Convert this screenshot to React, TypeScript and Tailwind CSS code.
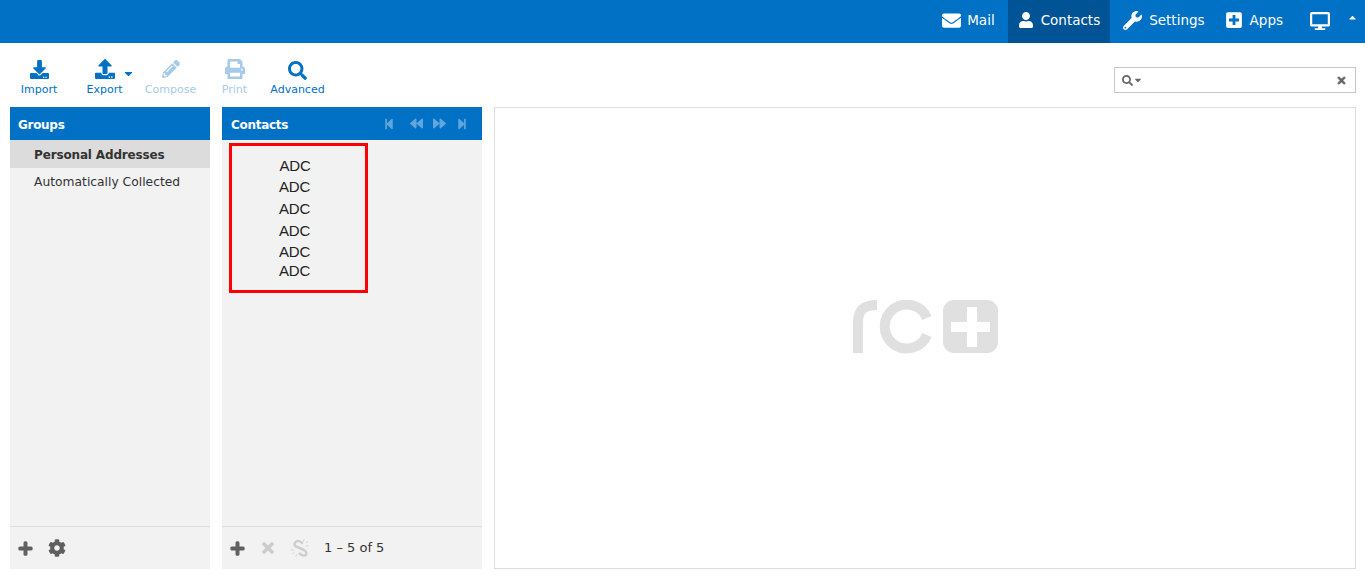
import { FaBackward, FaCaretDown, FaCaretUp, FaCog, FaDesktop, FaDownload, FaEnvelope, FaForward, FaPencilAlt, FaPlus, FaPlusSquare, FaPrint, FaSearch, FaStepBackward, FaStepForward, FaTimes, FaUpload, FaUser, FaWrench } from 'react-icons/fa'

const font = "font-['DejaVu_Sans',Verdana,sans-serif]"

function TopLink({ icon, label, active }: { icon: React.ReactNode; label: string; active?: boolean }) {
  return (
    <a className={`flex h-[43px] items-center gap-[7px] px-[10px] text-[13.5px] text-white ${active ? 'bg-[#005495]' : ''}`}>
      {icon}
      <span className="mb-[2px]">{label}</span>
    </a>
  )
}

function ToolButton({ icon, label, disabled, width }: { icon: React.ReactNode; label: string; disabled?: boolean; width: string }) {
  return (
    <div className={`flex flex-col items-center ${width} ${disabled ? 'text-[#a6cbe8]' : 'text-[#0071c5]'}`}>
      <div className="flex h-[24px] items-center justify-center">{icon}</div>
      <span className="mt-[2px] whitespace-nowrap text-[11px] leading-[14px]">{label}</span>
    </div>
  )
}

export default function App() {
  return (
    <div className={`flex h-[588px] w-[1365px] flex-col overflow-hidden bg-white ${font}`}>
      <header className="flex h-[43px] items-center justify-end bg-[#0071c5] pr-[7px]">
        <TopLink label="Mail" icon={<FaEnvelope size={19} className="mb-[3px] mr-[-1px]" />} />
        <div className="w-[3px]" />
        <TopLink active label="Contacts" icon={<FaUser size={16} className="mb-[4px]" />} />
        <div className="w-[3px]" />
        <TopLink label="Settings" icon={<FaWrench size={19} className="mb-[2px]" />} />
        <TopLink label="Apps" icon={<FaPlusSquare size={18} className="mb-[3px]" />} />
        <div className="ml-[17px] flex items-center gap-[17px] text-white">
          <FaDesktop size={20} className="mb-[2px]" />
          <FaCaretUp size={11} className="mb-[8px]" />
        </div>
      </header>

      <div className="flex h-[64px] items-start justify-between pl-[10px] pr-[9px]">
        <div className="flex pt-[14px]">
          <ToolButton width="w-[58px]" label="Import" icon={<FaDownload size={19} />} />
          <div className="relative">
            <ToolButton width="w-[73px]" label="Export" icon={<FaUpload size={20} />} />
            <FaCaretDown size={13} className="absolute left-[54px] top-[10px] text-[#0071c5]" />
          </div>
          <ToolButton width="w-[59px]" label="Compose" disabled icon={<FaPencilAlt size={18} />} />
          <ToolButton width="w-[69px]" label="Print" disabled icon={<FaPrint size={20} />} />
          <ToolButton width="w-[57px]" label="Advanced" icon={<FaSearch size={19} className="mt-[2px]" />} />
        </div>
        <div className="mt-[24px] flex h-[26px] w-[242px] items-center justify-between border border-[#c8c8c8] pl-[7px] pr-[8px] text-[#666]">
          <div className="flex items-center">
            <FaSearch size={11} />
            <FaCaretDown size={10} />
          </div>
          <FaTimes size={11} className="stroke-current stroke-[30px]" />
        </div>
      </div>

      <main className="flex h-[462px] gap-[12px] pl-[10px]">
        <section className="flex w-[200px] flex-col bg-[#f2f2f2]">
          <h2 className="flex h-[33px] items-center bg-[#0071c5] px-[8px] pt-[2px] text-[12px] font-bold tracking-[-0.3px] text-white">Groups</h2>
          <ul className="flex-1 text-[12.3px] text-[#333]">
            <li className="flex h-[28px] items-center bg-[#dcdcdc] pl-[24px] pt-[2px] text-[12px] font-bold tracking-[-0.15px]">Personal Addresses</li>
            <li className="flex h-[27px] items-center pl-[24px] pt-[2px]">Automatically Collected</li>
          </ul>
          <div className="flex h-[43px] items-center gap-[15px] border-t border-[#dddddd] pl-[8px] text-[#5f5f5f]">
            <FaPlus size={15} className="stroke-current stroke-[40px]" />
            <FaCog size={18} />
          </div>
        </section>

        <section className="flex w-[260px] flex-col bg-[#f2f2f2]">
          <div className="flex h-[33px] items-center justify-between bg-[#0071c5] pl-[9px] pr-[14px]">
            <h2 className="pt-[2px] text-[12px] font-bold tracking-[-0.3px] text-white">Contacts</h2>
            <div className="flex items-center text-[#5fa6dc]">
              <FaStepBackward size={12} />
              <FaBackward size={13} className="ml-[15px]" />
              <FaForward size={13} className="ml-[10px]" />
              <FaStepForward size={12} className="ml-[10px]" />
            </div>
          </div>
          <div className="flex-1 pl-[7px] pt-[3px]">
            <div className="flex h-[150px] w-[139px] flex-col items-center border-[3px] border-[#ff0000] pr-[8px] pt-[11px] font-['Liberation_Sans',Arial,sans-serif] text-[15px] leading-[18px] tracking-[-0.2px] text-[#222]">
              <span className="ml-[1px]">ADC</span>
              <span className="mt-[3px]">ADC</span>
              <span className="mt-[4px]">ADC</span>
              <span className="mt-[4px]">ADC</span>
              <span className="mt-[3px]">ADC</span>
              <span className="mt-[1px]">ADC</span>
            </div>
          </div>
          <div className="flex h-[43px] items-center border-t border-[#dddddd] pl-[8px] text-[#5f5f5f]">
            <FaPlus size={15} className="stroke-current stroke-[40px]" />
            <FaTimes size={16} className="ml-[15px] stroke-current stroke-[30px] text-[#cccccc]" />
            <svg width="20" height="20" viewBox="0 0 20 20" fill="none" stroke="#cfcfcf" strokeWidth="2.500" className="ml-[14px]">
              <path d="M13 5.500L10 3.500C7 2 3.500 4.500 5 8L14 12C17 13.500 17 17 14.500 17.500C12.500 18 10.500 16.500 9 15" />
              <path d="M14 1.500l-.5 2M17.500 3.500L16 5M18.500 8h-2.500M1 12h2.500M2.500 16L4 14.500M6 18.500l.5-2" strokeWidth="1" />
            </svg>
            <span className="ml-[14px] text-[13px] text-[#333]">1 – 5 of 5</span>
          </div>
        </section>

        <section className="flex w-[862px] items-center justify-center border border-[#dcdcdc]">
          <svg width="146" height="54" viewBox="0 0 146 54" className="mb-[22px]" aria-label="rc+">
            <path d="M6 53V22C6 10 12 5 25 5" fill="none" stroke="#e0e0e0" strokeWidth="10" />
            <path d="M75 35A22 22 0 1 1 75 18" fill="none" stroke="#e0e0e0" strokeWidth="10" />
            <rect x="91" y="0" width="55" height="53" rx="11" fill="#e0e0e0" />
            <path d="M115 7h10v15h13v10h-13v15h-10V32H99V22h16z" fill="#fff" />
          </svg>
        </section>
      </main>
    </div>
  )
}
